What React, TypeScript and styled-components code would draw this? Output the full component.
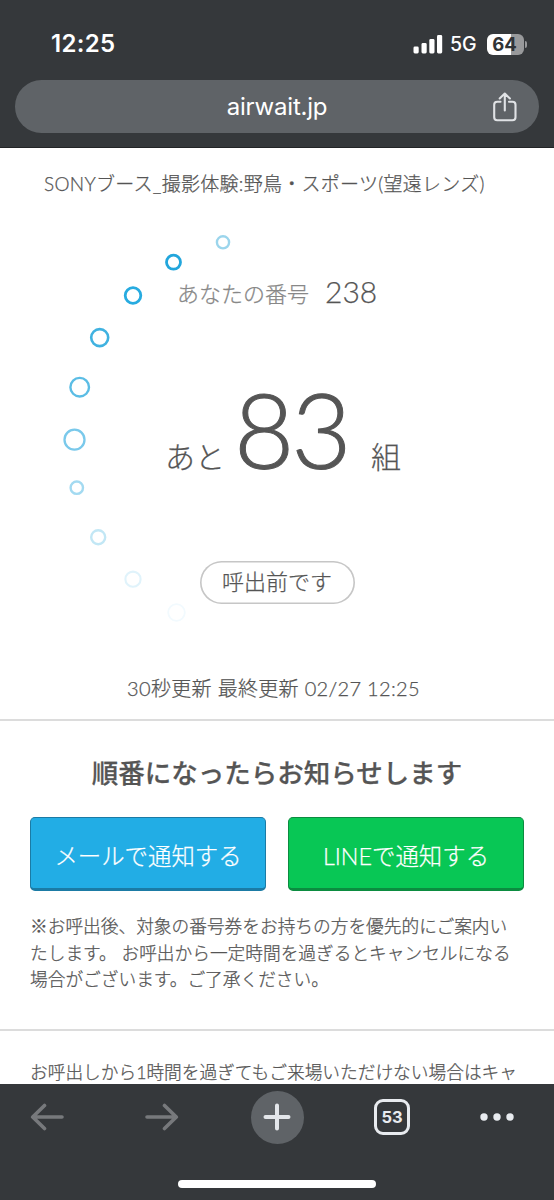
import React from "react";
import styled, { createGlobalStyle } from "styled-components";

const GlobalStyle = createGlobalStyle`
  * { box-sizing: border-box; }
  body { margin: 0; background: #fff; }
  h1, h2, p { margin: 0; font-weight: inherit; }
  button { padding: 0; border: 0; background: none; font: inherit; color: inherit; }
`;

const Screen = styled.div`
  display: flex;
  flex-direction: column;
  width: 554px;
  height: 1200px;
  overflow: hidden;
  background: #fff;
  color: #555;
  font-family: Lato, "Noto Sans CJK JP", sans-serif;
  font-weight: 300;
  white-space: nowrap;
`;

const BrowserHeader = styled.header`
  flex: none;
  height: 148px;
  background: #35383b;
  border-bottom: 1px solid #222426;
  font-family: Inter, sans-serif;
  color: #fff;
`;

const StatusBar = styled.div`
  display: flex;
  align-items: center;
  justify-content: space-between;
  height: 80px;
  padding: 8px 27px 0 51px;
`;

const Clock = styled.span`
  font-size: 24px;
  font-weight: 600;
  line-height: 30px;
  letter-spacing: 0.3px;
`;

const StatusIcons = styled.div`
  display: flex;
  align-items: center;
`;

const Network = styled.span`
  margin-left: 7px;
  width: 37px;
  font-size: 19.5px;
  font-weight: 500;
  line-height: 24px;
`;

const Battery = styled.div`
  display: flex;
  align-items: center;
  gap: 1px;
`;

const BatteryBody = styled.div`
  width: 37px;
  height: 21px;
  padding-right: 2px;
  border-radius: 6px;
  background: linear-gradient(90deg, #fff 64%, #98999b 64%);
  color: #303336;
  font-size: 18.5px;
  font-weight: 700;
  line-height: 21px;
  text-align: center;
`;

const BatteryTip = styled.div`
  width: 2px;
  height: 7px;
  border-radius: 0 2px 2px 0;
  background: #98999b;
`;

const AddressBar = styled.div`
  display: grid;
  grid-template-columns: 1fr auto 1fr;
  align-items: center;
  height: 53px;
  margin: 0 15px;
  padding: 0 21px;
  border-radius: 27px;
  background: #5f6367;
`;

const Host = styled.span`
  grid-column: 2;
  font-size: 24px;
  font-weight: 400;
  line-height: 30px;
  letter-spacing: -0.2px;
`;

const ShareButton = styled.button`
  display: flex;
  justify-self: end;
`;

const Page = styled.main`
  flex: 1;
  min-height: 0;
  overflow: hidden;
  -webkit-text-stroke: 0.25px;
`;

const Ticket = styled.section`
  position: relative;
  display: flex;
  flex-direction: column;
  height: 573px;
  border-bottom: 2px solid #dcdcdc;
`;

const Orbit = styled.svg`
  position: absolute;
  left: 0;
  top: 0;
`;

const BoothName = styled.h1`
  margin: 22px 0 0 44px;
  font-size: 19px;
  line-height: 28px;
  letter-spacing: 0.28px;
`;

const NumberRow = styled.div`
  display: flex;
  margin: 73px 0 0 177px;
  height: 42px;
`;

const NumberLabel = styled.span`
  width: 148px;
  font-size: 22px;
  line-height: 46px;
  color: #888;
`;

const NumberValue = styled.span`
  font-size: 30px;
  line-height: 40px;
`;

const WaitRow = styled.div`
  display: flex;
  margin: 60px 0 0 165px;
  height: 110px;
`;

const WaitUnit = styled.span<{ $width: number }>`
  width: ${(p) => p.$width}px;
  padding-top: 68px;
  font-size: 30px;
  line-height: 30px;
`;

const WaitCount = styled.span`
  width: 136px;
  font-size: 104px;
  line-height: 112px;
  letter-spacing: -3px;
  text-indent: -1px;
  -webkit-text-stroke: 1px;
`;

const Status = styled.div`
  align-self: center;
  width: 155px;
  height: 43px;
  margin-top: 78px;
  border-radius: 22px;
  box-shadow: inset 0 0 0 1.6px #c6c6c6;
  font-size: 22px;
  line-height: 41px;
  text-align: center;
`;

const Updated = styled.p`
  margin-top: 70px;
  padding-right: 7px;
  text-align: center;
  font-size: 20px;
  line-height: 28px;
  letter-spacing: 0.32px;
`;

const Notify = styled.section`
  height: 310px;
  padding: 32px 30px 0;
  border-bottom: 2px solid #dcdcdc;
`;

const NotifyTitle = styled.h2`
  text-align: center;
  font-size: 26.5px;
  font-weight: 500;
  line-height: 40px;
`;

const NotifyButtons = styled.div`
  display: grid;
  grid-template-columns: 1fr 1fr;
  gap: 22px;
  margin-top: 24px;
`;

const NotifyButton = styled.button<{ $fill: string; $edge: string }>`
  height: 74px;
  padding-top: 7px;
  border: 1px solid ${(p) => p.$edge};
  border-bottom-width: 3px;
  border-radius: 5px;
  background: ${(p) => p.$fill};
  color: #fff;
  font-size: 23.4px;
  line-height: 63px;
`;

const Note = styled.p`
  margin-top: 23px;
  font-size: 17.7px;
  line-height: 26.5px;
`;

const Expiry = styled.p`
  padding: 28.5px 30px 0;
  font-size: 17.7px;
  line-height: 26.5px;
`;

const BrowserFooter = styled.footer`
  flex: none;
  display: flex;
  flex-direction: column;
  align-items: center;
  justify-content: space-between;
  height: 116px;
  padding: 6px 0 12px;
  background: #35383b;
`;

const Toolbar = styled.nav`
  display: grid;
  grid-template-columns: 94px 136px 94px 136px 74px;
  justify-items: center;
  align-items: center;
  align-self: stretch;
  height: 54px;
`;

const ToolButton = styled.button`
  display: flex;
`;

const AddButton = styled(ToolButton)`
  align-items: center;
  justify-content: center;
  width: 53px;
  height: 53px;
  border-radius: 50%;
  background: #5f6367;
`;

const TabsButton = styled.button`
  width: 36px;
  height: 36px;
  border: 3px solid #e8ebef;
  border-radius: 9px;
  color: #e8ebef;
  font: 700 16.5px/30px Inter, sans-serif;
`;

const HomeIndicator = styled.div`
  width: 198px;
  height: 8px;
  border-radius: 4px;
  background: #fff;
`;

const dots = [
  { x: 223, y: 94.3, r: 6.1, w: 2.4, color: "#9bd5ec" },
  { x: 173.5, y: 114.2, r: 7, w: 2.8, color: "#22a6dc" },
  { x: 133, y: 147.5, r: 7.8, w: 2.8, color: "#27abe0" },
  { x: 99.7, y: 189.6, r: 8.5, w: 2.6, color: "#40b2e0" },
  { x: 79.7, y: 239.2, r: 9.3, w: 2.4, color: "#5bbde5" },
  { x: 74.5, y: 291.7, r: 10, w: 2.3, color: "#7ac9eb" },
  { x: 76.8, y: 339.7, r: 6.2, w: 2.4, color: "#a3daf1" },
  { x: 98.2, y: 389.2, r: 7, w: 2.4, color: "#c2e7f5" },
  { x: 133, y: 431.2, r: 7.6, w: 2.1, color: "#e0f3fb" },
  { x: 176.5, y: 464.5, r: 8.3, w: 1.8, color: "#f2fafe" },
];

function SignalIcon() {
  return (
    <svg width="30" height="20" viewBox="0 0 30 20" fill="#fff">
      <rect x="0.5" y="12.5" width="5.2" height="7" rx="1.4" />
      <rect x="8.5" y="9" width="5.2" height="10.5" rx="1.4" />
      <rect x="16.3" y="5" width="5.2" height="14.5" rx="1.4" />
      <rect x="24" y="1" width="5.2" height="18.5" rx="1.4" />
    </svg>
  );
}

function ShareIcon() {
  return (
    <svg width="26" height="30" viewBox="0 0 26 30" fill="none" stroke="#e0e2e5" strokeWidth="2.1" strokeLinecap="round" strokeLinejoin="round">
      <path d="M8.5 9.8H5.2a3 3 0 0 0-3 3v12.5a3 3 0 0 0 3 3h15.3a3 3 0 0 0 3-3V12.8a3 3 0 0 0-3-3H17M12.8 18.5V1.8M7.7 6.5l5.1-5 5.1 5" />
    </svg>
  );
}

function ArrowIcon({ forward = false }: { forward?: boolean }) {
  return (
    <svg width="34" height="28" viewBox="0 0 34 28" fill="none" stroke="#77797c" strokeWidth="3.6" strokeLinecap="round" strokeLinejoin="round">
      <path d={forward ? "M2 14h29M19.5 2.5 31.3 14 19.5 25.5" : "M32 14H3M14.5 2.5 2.7 14l11.8 11.5"} />
    </svg>
  );
}

export default function App() {
  return (
    <Screen>
      <GlobalStyle />
      <BrowserHeader>
        <StatusBar>
          <Clock>12:25</Clock>
          <StatusIcons>
            <SignalIcon />
            <Network>5G</Network>
            <Battery>
              <BatteryBody>64</BatteryBody>
              <BatteryTip />
            </Battery>
          </StatusIcons>
        </StatusBar>
        <AddressBar>
          <Host>airwait.jp</Host>
          <ShareButton aria-label="共有">
            <ShareIcon />
          </ShareButton>
        </AddressBar>
      </BrowserHeader>

      <Page>
        <Ticket>
          <Orbit width="260" height="500" fill="none">
            {dots.map((d) => (
              <circle key={d.y} cx={d.x} cy={d.y} r={d.r} stroke={d.color} strokeWidth={d.w} />
            ))}
          </Orbit>
          <BoothName>SONYブース_撮影体験:野鳥・スポーツ(望遠レンズ)</BoothName>
          <NumberRow>
            <NumberLabel>あなたの番号</NumberLabel>
            <NumberValue>238</NumberValue>
          </NumberRow>
          <WaitRow>
            <WaitUnit $width={70}>あと</WaitUnit>
            <WaitCount>83</WaitCount>
            <WaitUnit $width={30}>組</WaitUnit>
          </WaitRow>
          <Status>呼出前です</Status>
          <Updated>30秒更新 最終更新 02/27 12:25</Updated>
        </Ticket>

        <Notify>
          <NotifyTitle>順番になったらお知らせします</NotifyTitle>
          <NotifyButtons>
            <NotifyButton $fill="#22ade5" $edge="#1b7ba5">メールで通知する</NotifyButton>
            <NotifyButton $fill="#08c755" $edge="#0b8c40">LINEで通知する</NotifyButton>
          </NotifyButtons>
          <Note>
            ※お呼出後、対象の番号券をお持ちの方を優先的にご案内い
            <br />
            たします。 お呼出から一定時間を過ぎるとキャンセルになる
            <br />
            場合がございます。ご了承ください。
          </Note>
        </Notify>
        <Expiry>お呼出しから1時間を過ぎてもご来場いただけない場合はキャ</Expiry>
      </Page>

      <BrowserFooter>
        <Toolbar>
          <ToolButton aria-label="戻る">
            <ArrowIcon />
          </ToolButton>
          <ToolButton aria-label="進む">
            <ArrowIcon forward />
          </ToolButton>
          <AddButton aria-label="新しいタブ">
            <svg width="28" height="28" viewBox="0 0 28 28" stroke="#e3e6ea" strokeWidth="4" strokeLinecap="round">
              <path d="M14 2.5v23M2.5 14h23" />
            </svg>
          </AddButton>
          <TabsButton>53</TabsButton>
          <ToolButton aria-label="メニュー">
            <svg width="34" height="10" viewBox="0 0 34 10" fill="#e8ebef">
              <circle cx="4" cy="5" r="3.7" />
              <circle cx="17" cy="5" r="3.7" />
              <circle cx="30" cy="5" r="3.7" />
            </svg>
          </ToolButton>
        </Toolbar>
        <HomeIndicator />
      </BrowserFooter>
    </Screen>
  );
}
